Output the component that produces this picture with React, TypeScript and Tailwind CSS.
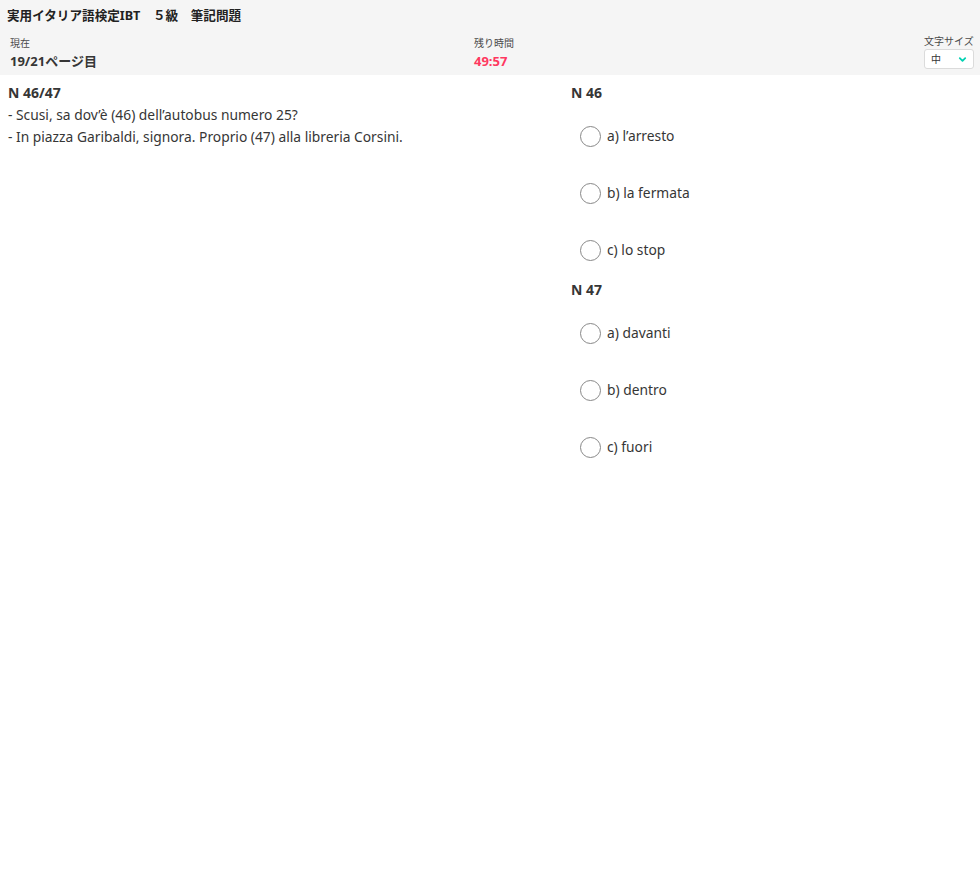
import { useState } from 'react'

const questions = [
  { no: 'N 46', options: ['a) l’arresto', 'b) la fermata', 'c) lo stop'] },
  { no: 'N 47', options: ['a) davanti', 'b) dentro', 'c) fuori'] },
]

const font = { fontFamily: '"Noto Sans", "Noto Sans CJK JP", sans-serif' }

export default function App() {
  const [answers, setAnswers] = useState<Record<string, number>>({})

  return (
    <div className="min-h-[884px] bg-white text-[#363636]" style={font}>
      {/* ヘッダー */}
      <div className="bg-[#f5f5f5] h-[75px] pt-[5px]">
        <h1 className="px-[7px] text-[12.6px] font-bold leading-[22px] text-[#222]">
          実用イタリア語検定IBT　５級　筆記問題
        </h1>
        <div className="grid grid-cols-[464px_1fr_auto] px-[10px] mt-[8px]">
          <div>
            <p className="text-[10px] leading-[14px] text-[#4a4a4a] mt-[1px]">現在</p>
            <p className="text-[13px] font-bold leading-[20px] mt-[1px]">19/21ページ目</p>
          </div>
          <div>
            <p className="text-[10px] leading-[14px] text-[#4a4a4a] mt-[1px]">残り時間</p>
            <p className="text-[13px] font-bold leading-[20px] mt-[1px] text-[#ff3860]">49:57</p>
          </div>
          <div className="-mr-[4px]">
            <p className="text-[10px] leading-[12px] text-[#4a4a4a]">文字サイズ</p>
            <div className="mt-[2px] w-[50px] h-[20px] bg-white border border-[#dbdbdb] rounded-[3px] flex items-center justify-between px-[6px]">
              <span className="text-[10px] leading-none">中</span>
              <svg className="w-[9px] h-[9px]" viewBox="0 0 10 10" fill="none" stroke="#00d1b2" strokeWidth={2} strokeLinecap="round" strokeLinejoin="round">
                <path d="M2 3.5l3 3 3-3" />
              </svg>
            </div>
          </div>
        </div>
      </div>

      {/* 本文 */}
      <div className="grid grid-cols-[563px_1fr] px-[8px] pt-[8px]">
        <div>
          <h2 className="text-[14px] font-bold leading-[20px]">N 46/47</h2>
          <p className="text-[13.8px] leading-[22px] mt-[1px]">- Scusi, sa dov’è (46) dell’autobus numero 25?</p>
          <p className="text-[13.8px] leading-[22px]">- In piazza Garibaldi, signora. Proprio (47) alla libreria Corsini.</p>
        </div>
        <div>
          {questions.map((q) => (
            <div key={q.no} className="mb-[19px]">
              <h2 className="text-[14px] font-bold leading-[20px]">{q.no}</h2>
              <div className="flex flex-col gap-[35px] mt-[22px] pl-[9px]">
                {q.options.map((opt, i) => (
                  <label key={opt} className="flex items-center gap-[6px] h-[22px] cursor-pointer">
                    <span className="w-[21px] h-[21px] rounded-full border-[1.5px] border-[#888] bg-white flex items-center justify-center">
                      {answers[q.no] === i && <span className="w-[11px] h-[11px] rounded-full bg-[#00d1b2]" />}
                    </span>
                    <input
                      type="radio"
                      className="hidden"
                      name={q.no}
                      onChange={() => setAnswers({ ...answers, [q.no]: i })}
                    />
                    <span className="text-[13.8px] leading-[22px]">{opt}</span>
                  </label>
                ))}
              </div>
            </div>
          ))}
        </div>
      </div>
    </div>
  )
}
